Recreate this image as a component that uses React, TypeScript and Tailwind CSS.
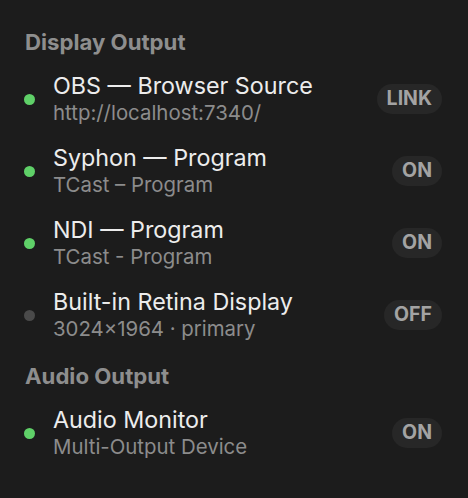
const rows1 = [
  { title: "OBS — Browser Source", sub: "http://localhost:7340/", on: true, badge: "LINK" },
  { title: "Syphon — Program", sub: "TCast – Program", on: true, badge: "ON" },
  { title: "NDI — Program", sub: "TCast - Program", on: true, badge: "ON" },
  { title: "Built-in Retina Display", sub: "3024×1964 · primary", on: false, badge: "OFF" },
];

const rows2 = [{ title: "Audio Monitor", sub: "Multi-Output Device", on: true, badge: "ON" }];

type Row = { title: string; sub: string; on: boolean; badge: string };

function OutputRow({ row }: { row: Row }) {
  return (
    <div className="flex items-center h-[72px]">
      <span
        className={
          "w-[11px] h-[11px] rounded-full shrink-0 " + (row.on ? "bg-[#5fd068]" : "bg-[#4a4a4a]")
        }
      />
      <div className="ml-[18px] flex-1 min-w-0">
        <div className="text-[23.3px] leading-[28px] text-[#ececec]">{row.title}</div>
        <div className="text-[20.4px] leading-[26px] text-[#8c8c8c]">{row.sub}</div>
      </div>
      <span className="px-[10px] h-[30px] flex items-center rounded-full bg-[#272727] text-[#a3a3a3] text-[19.5px] font-bold">
        {row.badge}
      </span>
    </div>
  );
}

export default function App() {
  return (
    <div
      className="w-[468px] h-[498px] bg-[#1c1c1c] pl-6 pr-[26px] pt-[30px]"
      style={{ fontFamily: "Inter, 'Noto Sans', sans-serif" }}
    >
      <h2 className="text-[22.2px] leading-[24px] font-bold text-[#8e8e8e] mb-[9px] pl-[1px]">Display Output</h2>
      {rows1.map((r, i) => (
        <OutputRow key={i} row={r} />
      ))}
      <h2 className="text-[22.2px] leading-[24px] font-bold text-[#8e8e8e] mt-[13px] mb-[9px] pl-[1px]">Audio Output</h2>
      {rows2.map((r, i) => (
        <OutputRow key={i} row={r} />
      ))}
    </div>
  );
}
